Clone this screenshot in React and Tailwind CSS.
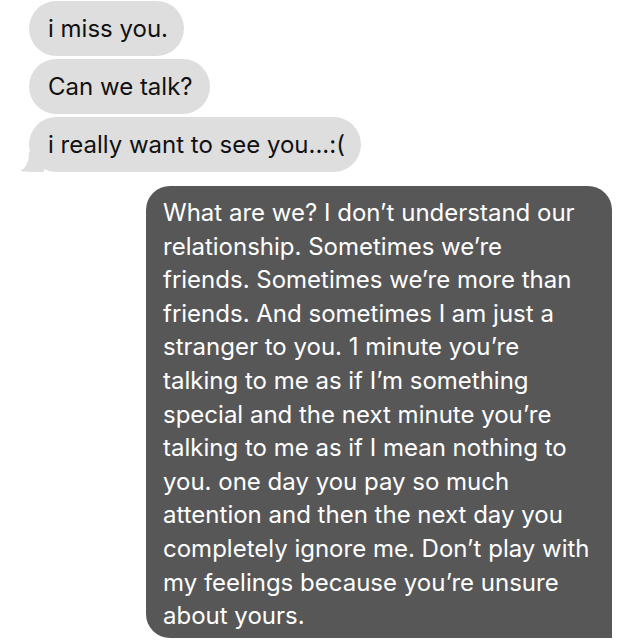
import React from "react";

const lines = [
  "What are we? I don’t understand our",
  "relationship. Sometimes we’re",
  "friends. Sometimes we’re more than",
  "friends. And sometimes I am just a",
  "stranger to you. 1 minute you’re",
  "talking to me as if I’m something",
  "special and the next minute you’re",
  "talking to me as if I mean nothing to",
  "you. one day you pay so much",
  "attention and then the next day you",
  "completely ignore me. Don’t play with",
  "my feelings because you’re unsure",
  "about yours.",
];

function Gray({ children, tail, w }) {
  return (
    <div className={`relative h-[55px] rounded-[28px] bg-[#dedede] pl-[19px] flex items-center text-[24px] text-[#111] ${w}`}>
      {tail && (
        <svg className="absolute left-[-9px] bottom-0" width="24" height="22" viewBox="0 0 24 22">
          <path d="M24 0 L24 22 C16 22 8 22 0 21 C6 18 9 12 9 2 Z" fill="#dedede" />
        </svg>
      )}
      <span className="relative">{children}</span>
    </div>
  );
}

export default function App() {
  return (
    <div className="w-[640px] h-[640px] overflow-hidden bg-white font-['Inter',sans-serif]">
      <div className="pl-[29px] pt-[1px] flex flex-col items-start gap-[3px]">
        <Gray w="w-[155px]">i miss you.</Gray>
        <Gray w="w-[181px]">Can we talk?</Gray>
        <Gray w="w-[332px]" tail>i really want to see you...:(</Gray>
      </div>
      <div className="ml-[146px] mt-[14px] w-[466px] h-[452px] rounded-[24px] rounded-br-none bg-[#575757] pl-[17px] pt-[10px] text-white text-[24px] leading-[33.6px]">
        {lines.map((l, i) => (
          <div key={i} className="whitespace-nowrap">{l}</div>
        ))}
      </div>
    </div>
  );
}
